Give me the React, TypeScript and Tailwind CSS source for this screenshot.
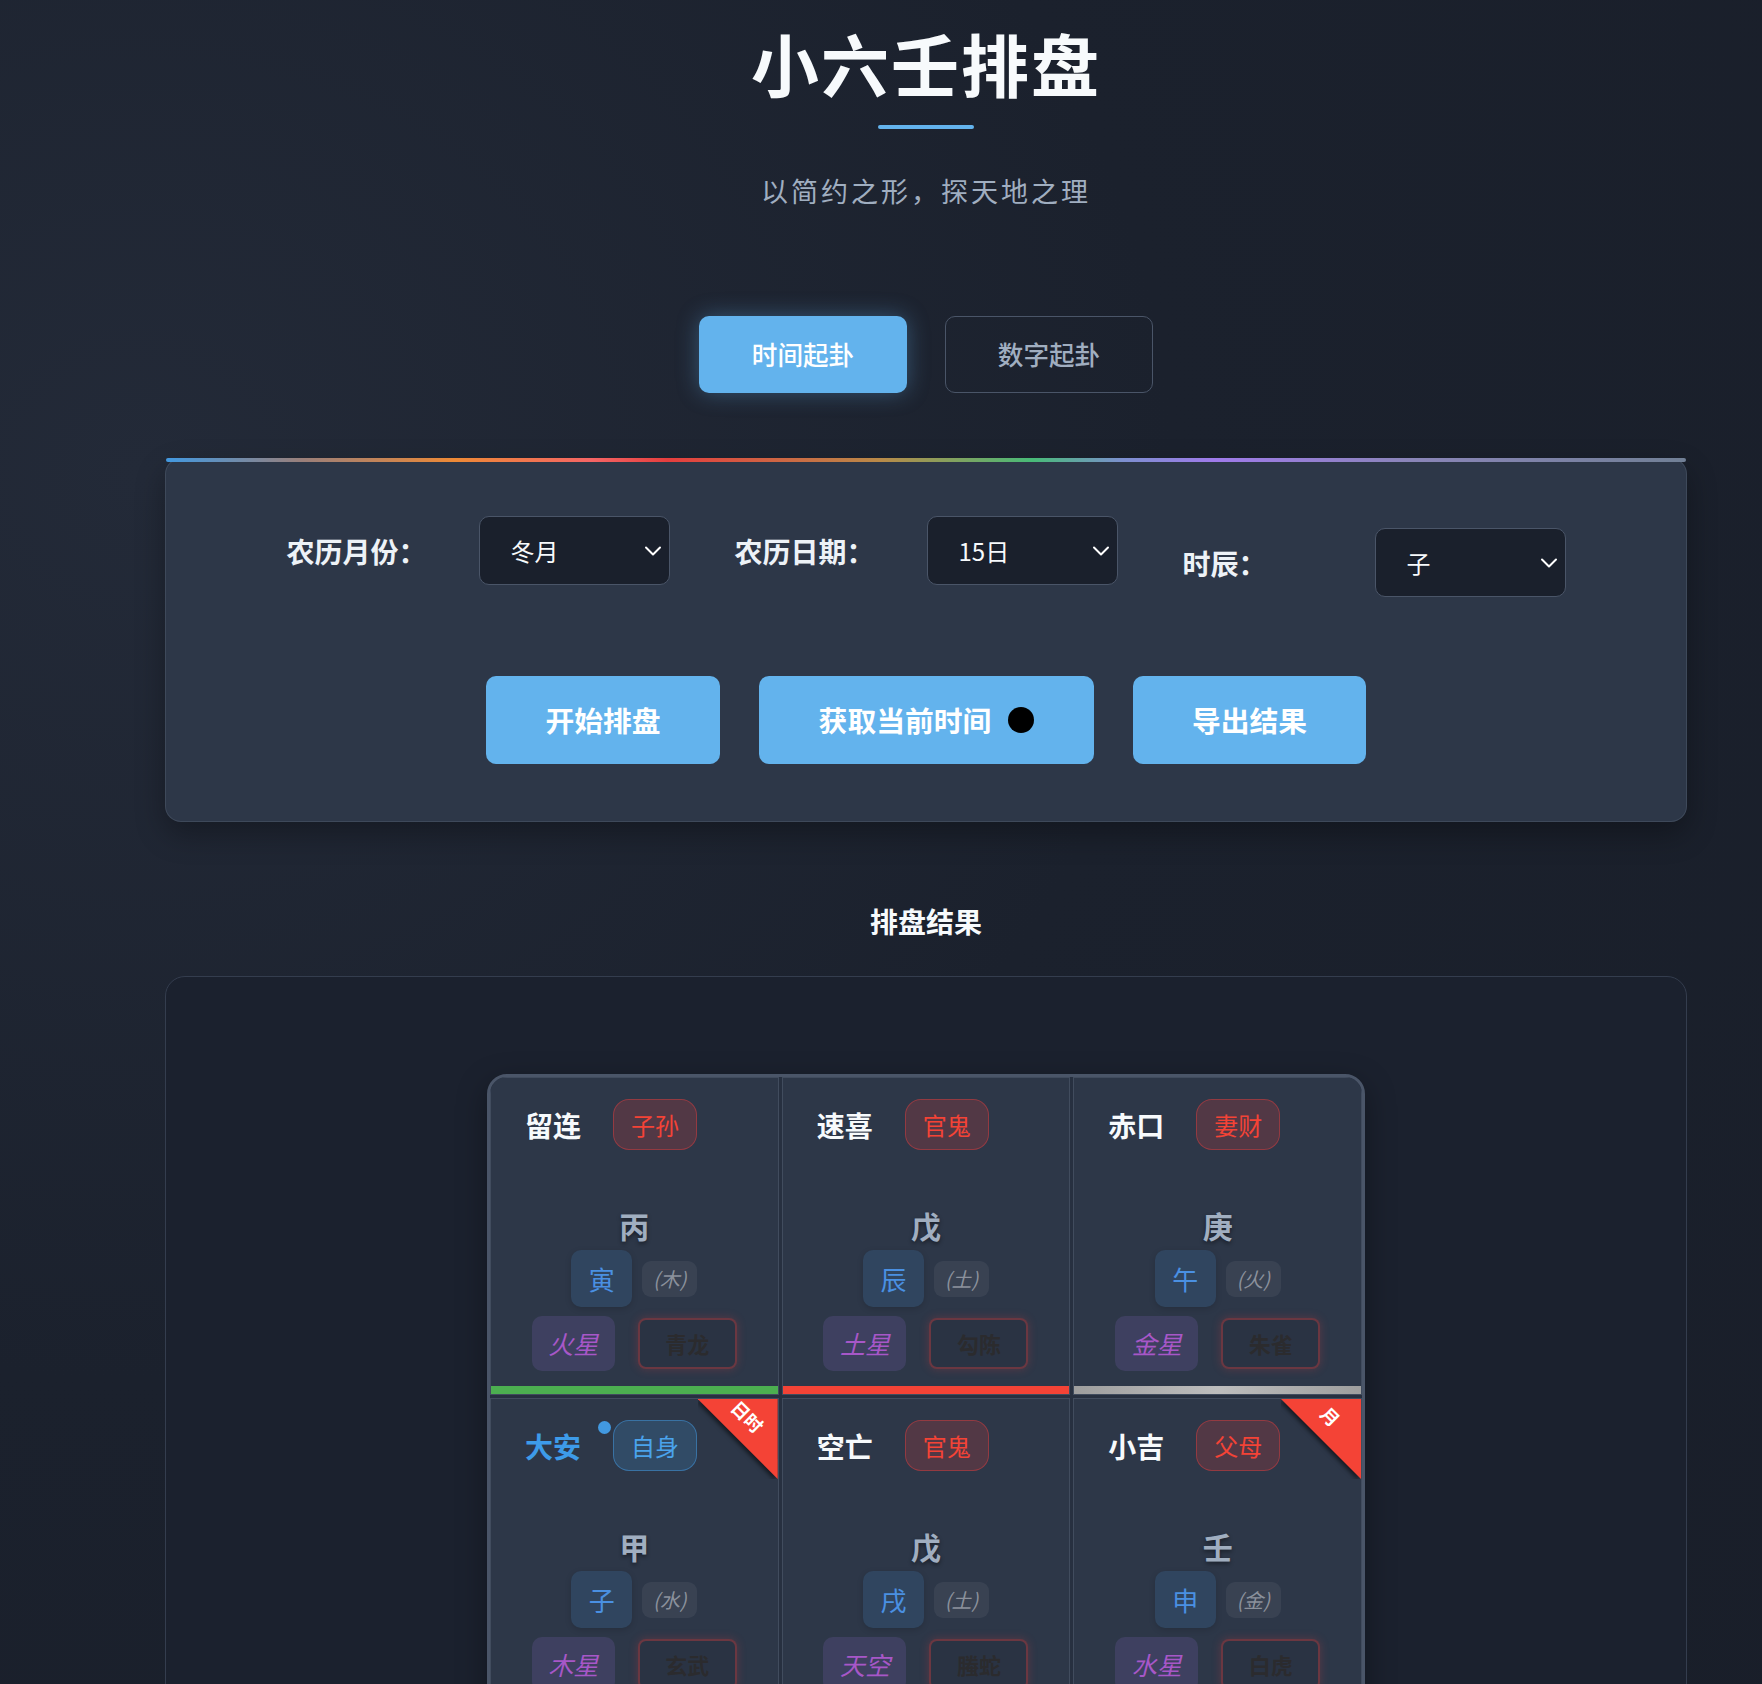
type Palace = {
  name: string;
  active?: boolean;
  relation: string;
  gan: string;
  zhi: string;
  wx: string;
  star: string;
  shen: string;
  bar: string;
  ribbon?: string;
};

const palaces: Palace[] = [
  { name: "留连", relation: "子孙", gan: "丙", zhi: "寅", wx: "木", star: "火星", shen: "青龙", bar: "bg-[#4caf50]" },
  { name: "速喜", relation: "官鬼", gan: "戊", zhi: "辰", wx: "土", star: "土星", shen: "勾陈", bar: "bg-[#f44336]" },
  { name: "赤口", relation: "妻财", gan: "庚", zhi: "午", wx: "火", star: "金星", shen: "朱雀", bar: "bg-[linear-gradient(90deg,#9e9e9e,#bdbdbd,#9e9e9e)]" },
  { name: "大安", active: true, relation: "自身", gan: "甲", zhi: "子", wx: "水", star: "木星", shen: "玄武", bar: "bg-[#4caf50]", ribbon: "日时" },
  { name: "空亡", relation: "官鬼", gan: "戊", zhi: "戌", wx: "土", star: "天空", shen: "螣蛇", bar: "bg-[#c79a4b]" },
  { name: "小吉", relation: "父母", gan: "壬", zhi: "申", wx: "金", star: "水星", shen: "白虎", bar: "bg-[#4299e1]", ribbon: "月" },
];

function Ribbon({ text }: { text: string }) {
  return (
    <div className="pointer-events-none absolute right-0 top-0 h-[80px] w-[80px] overflow-hidden">
      <div className="absolute inset-0 drop-shadow-[-2px_2px_2px_rgba(0,0,0,0.55)]">
        <div className="h-full w-full bg-[#f44336] [clip-path:polygon(0_0,100%_0,100%_100%)]" />
      </div>
      <div className="absolute left-0 top-[7px] w-[100px] rotate-45 text-center text-[18px] font-bold leading-[20px] text-white">
        {text}
      </div>
    </div>
  );
}

function PalaceCell({ p }: { p: Palace }) {
  const badge = p.active
    ? "border-[#4299e1]/50 bg-[#4299e1]/20 text-[#4aa3ec]"
    : "border-[#e53e3e]/45 bg-[#e53e3e]/20 text-[#f44336]";
  return (
    <div className="relative flex flex-col overflow-hidden border border-[#4a5568]/70 bg-[#2d3748]">
      {p.ribbon && <Ribbon text={p.ribbon} />}
      <div className="flex items-center gap-[32px] px-[34px] pt-[21px]">
        <span
          className={
            p.active
              ? "text-[28px] font-bold leading-none text-[#3d9be9]"
              : "text-[28px] font-bold leading-none text-[#f7fafc]"
          }
        >
          {p.name}
        </span>
        <span className={`relative flex h-[51px] items-center rounded-[16px] border px-[17px] text-[24px] leading-none ${badge}`}>
          {p.active && <span className="absolute left-[-16px] top-0 h-[13px] w-[13px] rounded-full bg-[#4299e1]" />}
          {p.relation}
        </span>
      </div>

      <div className="mt-[57px] flex flex-col items-center">
        <div className="text-[30px] font-bold leading-[36px] text-[#a0aec0] [text-shadow:0_2px_4px_rgba(0,0,0,0.45)]">
          {p.gan}
        </div>
        <div className="mt-[7px] flex items-center gap-[10px]">
          <div className="flex h-[57px] w-[61px] items-center justify-center rounded-[10px] bg-[#4299e1]/15 text-[26px] text-[#4a90e2] shadow-[0_2px_6px_rgba(0,0,0,0.15)]">
            {p.zhi}
          </div>
          <div className="flex h-[36px] w-[55px] items-center justify-center rounded-[9px] bg-white/[0.06] text-[20px] italic text-[#8b919c]">
            ({p.wx})
          </div>
        </div>
        <div className="mt-[9px] flex items-center gap-[23px]">
          <div className="flex h-[55px] w-[83px] items-center justify-center rounded-[10px] bg-[#9f7aea]/15 text-[25px] italic text-[#a757c8]">
            {p.star}
          </div>
          <div className="flex h-[51px] w-[99px] items-center justify-center rounded-[8px] border-2 border-[#e53e3e]/35 bg-[#2a3343] text-[22px] font-bold text-[#2b2b2e] shadow-[0_0_10px_rgba(229,62,62,0.25)]">
            {p.shen}
          </div>
        </div>
      </div>

      <div className={`mt-[15px] h-[8px] w-full ${p.bar}`} />
    </div>
  );
}

function Field({
  label,
  options,
  value,
  className = "",
}: {
  label: string;
  options: string[];
  value: string;
  className?: string;
}) {
  return (
    <div className={`flex items-center ${className}`}>
      <label className="w-[192px] text-[28px] font-semibold text-[#edf2f7]">{label}</label>
      <div className="relative w-[191px]">
        <select
          defaultValue={value}
          className="h-[69px] w-full appearance-none rounded-[10px] border border-[#4a5568] bg-[#1a202c] pl-[31px] text-[24px] text-[#f7fafc] outline-none"
        >
          {options.map((o) => (
            <option key={o} value={o}>
              {o}
            </option>
          ))}
        </select>
        {/* dropdown chevron */}
        <svg
          width="18"
          height="11"
          viewBox="0 0 18 11"
          className="pointer-events-none absolute right-[8px] top-1/2 -translate-y-1/2"
        >
          <polyline points="2,2 9,9 16,2" fill="none" stroke="#ffffff" strokeWidth="2" strokeLinecap="round" strokeLinejoin="round" />
        </svg>
      </div>
    </div>
  );
}

export default function App() {
  const months = ["正月", "二月", "三月", "四月", "五月", "六月", "七月", "八月", "九月", "十月", "冬月", "腊月"];
  const days = Array.from({ length: 30 }, (_, i) => `${i + 1}日`);
  const hours = ["子", "丑", "寅", "卯", "辰", "巳", "午", "未", "申", "酉", "戌", "亥"];

  return (
    <div className="min-h-screen bg-[#1a202c] bg-[radial-gradient(ellipse_at_8%_25%,#232a38_0%,#1b212d_45%,#191e29_100%)] font-['Noto_Sans_CJK_SC','Noto_Sans',sans-serif] text-white">
      <div className="pb-[80px] pl-[165px] pr-[75px]">
        <header className="flex flex-col items-center pt-[29px]">
          <h1 className="text-[68px] font-bold leading-none tracking-[2px] text-[#f7fafc]">小六壬排盘</h1>
          <div className="mt-[28px] h-[4px] w-[96px] rounded-full bg-[#63b3ed]" />
          <p className="mt-[44px] text-[27px] leading-[36px] tracking-[3px] text-[#a0aec0]">以简约之形，探天地之理</p>
        </header>

        <div className="mt-[107px] flex justify-center gap-[38px]">
          <button className="h-[77px] w-[208px] rounded-[10px] bg-[#63b3ed] text-[25.6px] font-medium text-white shadow-[0_0_22px_rgba(99,179,237,0.35)]">
            时间起卦
          </button>
          <button className="h-[77px] w-[208px] rounded-[10px] border border-[#4a5568] bg-transparent text-[25.6px] font-medium text-[#a0aec0]">
            数字起卦
          </button>
        </div>

        <section className="relative mt-[65px] rounded-[16px] border border-[#4a5568]/60 bg-[#2d3748] pb-[57px] pt-[57px] shadow-[0_12px_30px_rgba(0,0,0,0.3)]">
          <div className="absolute left-0 right-0 top-[-1px] h-[4px] rounded-full bg-[linear-gradient(90deg,#4299e1_0%,#9a7f7a_9%,#ed8936_19%,#f56565_28%,#e53e3e_33%,#b98a48_47%,#48bb78_57%,#7d8fd0_63%,#9f7aea_69%,#8a85b8_82%,#718096_100%)]" />
          <div className="flex items-start justify-center gap-[65px]">
            <Field label="农历月份：" options={months} value="冬月" />
            <Field label="农历日期：" options={days} value="15日" />
            <Field label="时辰：" options={hours} value="子" className="mt-[12px]" />
          </div>
          <div className="mt-[79px] flex justify-center gap-[39px]">
            <button className="h-[88px] w-[234px] rounded-[10px] bg-[#63b3ed] text-[28.8px] font-bold text-white">
              开始排盘
            </button>
            <button className="flex h-[88px] w-[335px] items-center justify-center gap-[17px] rounded-[10px] bg-[#63b3ed] text-[28.8px] font-bold text-white">
              <span>获取当前时间</span>
              <span className="h-[26px] w-[26px] rounded-full bg-black" />
            </button>
            <button className="h-[88px] w-[233px] rounded-[10px] bg-[#63b3ed] text-[28.8px] font-bold text-white">
              导出结果
            </button>
          </div>
        </section>

        <h2 className="mt-[79px] text-center text-[28px] font-bold leading-[40px] text-[#f7fafc]">排盘结果</h2>

        <section className="mt-[35px] rounded-[20px] border border-[#343d4e] bg-[#1b212e] pb-[97px] pt-[97px]">
          <div className="mx-auto grid w-[878px] grid-cols-3 gap-[3px] overflow-hidden rounded-[20px] border-[3px] border-[#4a5568] bg-[#273040] shadow-[0_10px_30px_rgba(0,0,0,0.35)]">
            {palaces.map((p) => (
              <PalaceCell key={p.name} p={p} />
            ))}
          </div>
        </section>
      </div>
    </div>
  );
}
